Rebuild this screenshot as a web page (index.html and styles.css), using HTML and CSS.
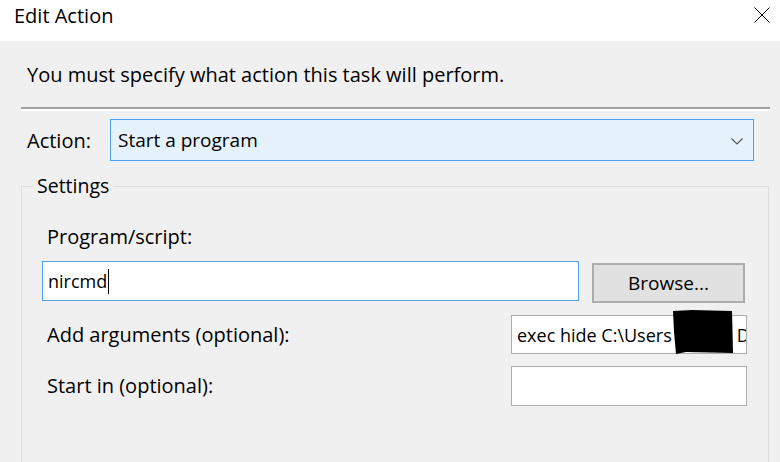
FILE: index.html
```html
<!DOCTYPE html>
<html>
<head>
<meta charset="utf-8">
<link rel="stylesheet" href="styles.css">
</head>
<body>
<div class="window">
  <div class="titlebar">
    <span class="title">Edit Action</span>
    <svg class="close" width="16" height="16" viewBox="0 0 16 16"><path d="M0.5 0.5 L15.5 15.5 M15.5 0.5 L0.5 15.5" stroke="#000" stroke-width="1" fill="none"/></svg>
  </div>
  <div class="content">
    <p class="instruction">You must specify what action this task will perform.</p>
    <div class="separator"></div>
    <div class="action-row">
      <span class="label">Action:</span>
      <div class="combo">
        <span class="combo-text">Start a program</span>
        <svg class="chevron" width="12" height="7" viewBox="0 0 12 7"><path d="M0.5 0.5 L6 6 L11.5 0.5" stroke="#5a5a5a" stroke-width="1.2" fill="none"/></svg>
      </div>
    </div>
    <fieldset class="group">
      <legend class="legend">Settings</legend>
      <div class="field-label">Program/script:</div>
      <div class="program-row">
        <div class="input focused"><span>nircmd</span><span class="caret"></span></div>
        <div class="button">Browse...</div>
      </div>
      <div class="opt-row">
        <span class="field-label">Add arguments (optional):</span>
        <div class="input small args"><span class="args-text">exec hide C:\Users<span class="hidden-gap"></span>D</span>
          <svg class="redact" width="62" height="44" viewBox="0 0 62 44"><polygon points="1,1 20,0 60,1 61,43 14,42 4,44 2,22" fill="#000"/></svg>
        </div>
      </div>
      <div class="opt-row start">
        <span class="field-label">Start in (optional):</span>
        <div class="input small tall"></div>
      </div>
    </fieldset>
  </div>
</div>
</body>
</html>
```
FILE: styles.css
```css
* { box-sizing: border-box; }
html, body { margin: 0; padding: 0; }
body {
  width: 780px;
  height: 462px;
  overflow: hidden;
  background: #f0f0f0;
  font-family: "Open Sans", "Noto Sans", sans-serif;
  color: #000;
}
.window { width: 780px; height: 462px; display: flex; flex-direction: column; overflow: hidden; }
.titlebar {
  flex: 0 0 41px;
  height: 41px;
  background: #fff;
  display: flex;
  justify-content: space-between;
  align-items: flex-start;
  padding: 2px 10px 0 14px;
}
.title { font-size: 20px; line-height: 28px; }
.close { margin-top: 5px; }
.content { flex: 1 1 auto; display: flex; flex-direction: column; overflow: hidden; min-height: 0; }
.instruction {
  margin: 20px 0 0 27px;
  font-size: 20px;
  line-height: 28px;
  flex-shrink: 0;
}
.separator {
  flex-shrink: 0;
  margin: 18px 10px 0 21px;
  height: 4px;
  border-top: 2px solid #a0a0a0;
  border-bottom: 2px solid #fff;
}
.action-row {
  flex-shrink: 0;
  display: flex;
  align-items: center;
  margin: 8px 0 0 27px;
}
.label { font-size: 20px; width: 83px; }
.combo {
  width: 644px;
  height: 42px;
  border: 1px solid #4da3ea;
  background: #e5f1fb;
  display: flex;
  align-items: center;
  justify-content: space-between;
  padding: 0 10px 0 7px;
  font-size: 19px;
}
.chevron { margin-top: 2px; }
.group {
  flex-shrink: 0;
  margin: 13px 11px 0 21px;
  padding: 0 0 80px 20px;
  border: 1px solid #dcdcdc;
  min-width: 0;
}
.legend {
  font-size: 19.5px;
  line-height: 24px;
  padding: 0 4px;
  margin-left: -9px;
}
.field-label { font-size: 20px; padding-left: 5px; line-height: 28px; }
.group > .field-label { margin-top: 25px; }
.program-row {
  display: flex;
  align-items: flex-start;
  gap: 13px;
  margin-top: 10px;
}
.input {
  height: 40px;
  width: 537px;
  background: #fff;
  border: 1px solid #adadad;
  display: flex;
  align-items: center;
  padding-left: 5px;
  font-size: 18px;
  white-space: nowrap;
}
.input.focused { border-color: #4da3ea; }
.caret { width: 1px; height: 25px; background: #000; margin-left: 1px; }
.button {
  width: 153px;
  height: 40px;
  margin-top: 2px;
  background: #e1e1e1;
  border: 2px solid #adadad;
  display: flex;
  align-items: center;
  justify-content: center;
  font-size: 19px;
}
.opt-row {
  display: flex;
  align-items: center;
  justify-content: space-between;
  margin-top: 12px;
  padding-right: 21px;
}
.input.small { width: 236px; height: 39px; position: relative; }
.input.small.tall { height: 40px; }
.args-text { overflow: hidden; display: block; width: 229px; }
.hidden-gap { display: inline-block; width: 65px; }
.redact { position: absolute; left: 160px; top: -6px; }
```
